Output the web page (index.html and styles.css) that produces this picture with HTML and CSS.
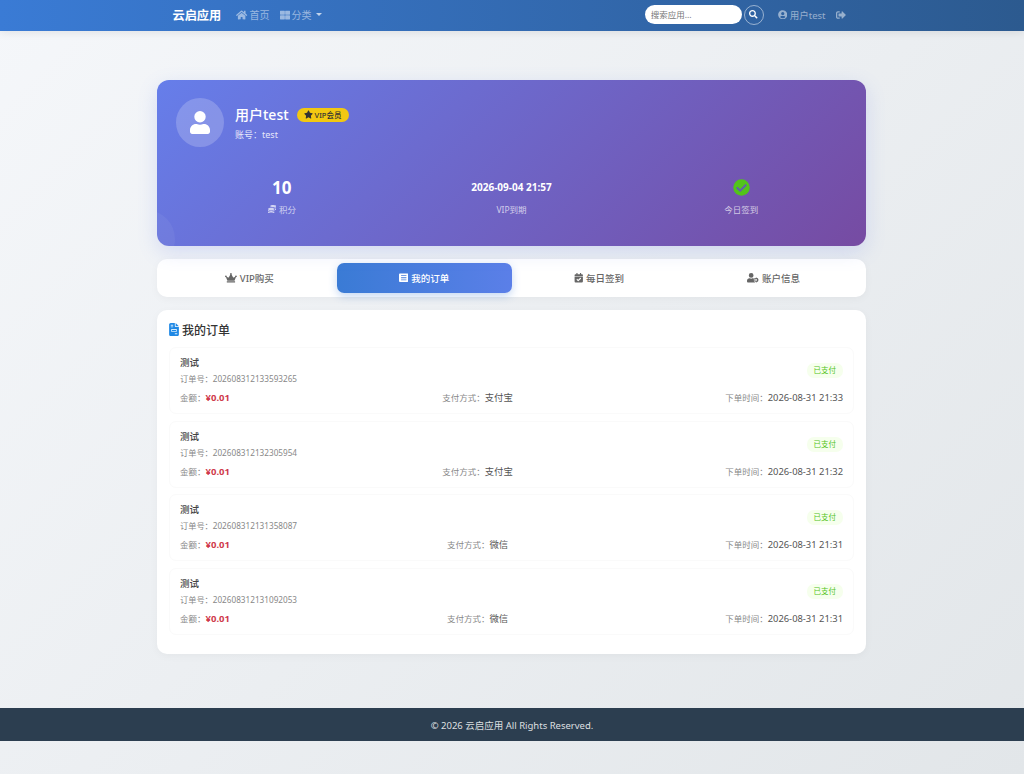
FILE: index.html
```html
<!DOCTYPE html>
<html lang="zh-CN">
<head>
    <meta charset="UTF-8">
    <meta name="viewport" content="width=device-width, initial-scale=1.0">
    <title>云启应用 - 我的订单</title>
    <link rel="stylesheet" href="styles.css">
</head>
<body>
    <nav class="navbar">
        <div class="nav-inner">
            <a class="brand">云启应用</a>
            <a class="nav-link">
                <svg class="icon icon-home" viewBox="0 0 576 512"><path d="M280 148 96 300v164a16 16 0 0 0 16 16l112-.3a16 16 0 0 0 16-16V368a16 16 0 0 1 16-16h64a16 16 0 0 1 16 16v95.6a16 16 0 0 0 16 16l112 .4a16 16 0 0 0 16-16V300L296 148a12 12 0 0 0-16 0zM572 251l-84-69V44a12 12 0 0 0-12-12h-56a12 12 0 0 0-12 12v72l-90-74a48 48 0 0 0-61 0L4 251a12 12 0 0 0-2 17l26 31a12 12 0 0 0 17 2L280 107a12 12 0 0 1 16 0l235 194a12 12 0 0 0 17-2l26-31a12 12 0 0 0-2-17z"/></svg>
                首页
            </a>
            <a class="nav-link">
                <svg class="icon" viewBox="0 0 512 512"><path d="M0 56a24 24 0 0 1 24-24h200a24 24 0 0 1 24 24v160a24 24 0 0 1-24 24H24a24 24 0 0 1-24-24zM264 56a24 24 0 0 1 24-24h200a24 24 0 0 1 24 24v160a24 24 0 0 1-24 24H288a24 24 0 0 1-24-24zM0 296a24 24 0 0 1 24-24h200a24 24 0 0 1 24 24v160a24 24 0 0 1-24 24H24a24 24 0 0 1-24-24zM264 296a24 24 0 0 1 24-24h200a24 24 0 0 1 24 24v160a24 24 0 0 1-24 24H288a24 24 0 0 1-24-24z"/></svg>
                分类
                <span class="caret"></span>
            </a>
            <div class="nav-right">
                <input class="search-input" type="text" placeholder="搜索应用...">
                <button class="search-btn">
                    <svg class="icon" viewBox="0 0 512 512"><path d="M505 442.700 405.300 343c-4.500-4.500-10.600-7-17-7H372c27.600-35.300 44-79.700 44-128C416 93.100 322.900 0 208 0S0 93.100 0 208s93.100 208 208 208c48.300 0 92.700-16.400 128-44v16.300c0 6.400 2.500 12.500 7 17l99.700 99.700c9.400 9.400 24.600 9.400 33.900 0l28.300-28.300c9.400-9.400 9.400-24.600.1-34zM208 336c-70.700 0-128-57.200-128-128 0-70.700 57.200-128 128-128 70.700 0 128 57.200 128 128 0 70.700-57.200 128-128 128z"/></svg>
                </button>
                <a class="nav-link user-link">
                    <svg class="icon" viewBox="0 0 512 512"><path d="M256 8C119 8 8 119 8 256s111 248 248 248 248-111 248-248S393 8 256 8zm0 96a88 88 0 1 1 0 176 88 88 0 0 1 0-176zm0 344c-59 0-111-27-146-69 19-36 56-61 99-61 2 0 5 0 7 1 13 4 27 7 40 7s27-3 40-7c2-1 5-1 7-1 43 0 80 25 99 61-35 42-87 69-146 69z"/></svg>
                    用户test
                </a>
                <a class="nav-link logout-link">
                    <svg class="icon" viewBox="0 0 512 512"><path d="M497 273 329 441c-15 15-41 4.500-41-17v-96H152c-13.300 0-24-10.700-24-24v-96c0-13.300 10.700-24 24-24h136V88c0-21.400 25.900-32 41-17l168 168c9.300 9.400 9.300 24.600 0 34zM192 436v-40c0-6.600-5.400-12-12-12H96c-17.700 0-32-14.300-32-32V160c0-17.700 14.300-32 32-32h84c6.600 0 12-5.400 12-12V76c0-6.600-5.400-12-12-12H96c-53 0-96 43-96 96v192c0 53 43 96 96 96h84c6.600 0 12-5.400 12-12z"/></svg>
                </a>
            </div>
        </div>
    </nav>

    <main class="container">
        <section class="profile-card">
            <div class="profile-head">
                <div class="avatar">
                    <svg viewBox="0 0 448 512"><path d="M224 256a128 128 0 1 0 0-256 128 128 0 0 0 0 256zm90 32h-17a174 174 0 0 1-146 0h-17C60 288 0 348 0 422v42c0 26 22 48 48 48h352c26 0 48-22 48-48v-42c0-74-60-134-134-134z"/></svg>
                </div>
                <div>
                    <div class="profile-name">
                        用户test
                        <span class="vip-badge">
                            <svg class="icon" viewBox="0 0 576 512"><path d="M259 18 194 150 49 171c-26 4-37 36-18 55l105 102-25 145c-4 26 23 46 46 34l130-68 130 68c23 12 51-8 46-34l-25-145 105-102c19-19 8-51-18-55l-145-21L317 18c-12-24-46-24-58 0z"/></svg>
                            VIP会员
                        </span>
                    </div>
                    <div class="profile-account">账号：test</div>
                </div>
            </div>
            <div class="stats">
                <div class="stat">
                    <div class="stat-value stat-big">10</div>
                    <div class="stat-label">
                        <svg class="icon" viewBox="0 0 512 512"><path d="M0 405v43c0 35 86 64 192 64s192-29 192-64v-43c-41 29-117 43-192 43S41 434 0 405zM320 128c106 0 192-29 192-64S426 0 320 0 128 29 128 64s86 64 192 64zM0 300v51c0 35 86 64 192 64s192-29 192-64v-51c-41 34-117 52-192 52S41 334 0 300zm416 11c57-11 96-32 96-55v-43c-23 16-57 27-96 34zM192 160C86 160 0 196 0 240s86 80 192 80 192-36 192-80-86-80-192-80zm219 56c60-11 101-32 101-56v-43c-35 25-96 38-160 41 29 14 51 33 59 58z"/></svg>
                        积分
                    </div>
                </div>
                <div class="stat">
                    <div class="stat-value stat-date">2026-09-04 21:57</div>
                    <div class="stat-label">VIP到期</div>
                </div>
                <div class="stat">
                    <div class="stat-value">
                        <svg class="check-icon" viewBox="0 0 512 512"><circle cx="256" cy="256" r="248" fill="#52c41a"/><path fill="#5f63a8" d="M227 387 411 203c6-6 6-16 0-22l-23-23c-6-6-16-6-22 0L216 308l-70-70c-6-6-16-6-22 0l-23 23c-6 6-6 16 0 22l104 104c6 6 16 6 22 0z"/></svg>
                    </div>
                    <div class="stat-label">今日签到</div>
                </div>
            </div>
        </section>

        <div class="tabs">
            <button class="tab">
                <svg class="icon icon-wide" viewBox="0 0 640 512"><path d="M528 448H112c-9 0-16 7-16 16v32c0 9 7 16 16 16h416c9 0 16-7 16-16v-32c0-9-7-16-16-16zm64-320c-26 0-48 22-48 48 0 7 2 14 4 20l-72 43c-15 9-35 4-44-12L351 85c11-9 17-22 17-37 0-26-22-48-48-48s-48 22-48 48c0 15 7 28 17 37l-81 142c-9 16-29 21-44 12l-72-43c3-6 4-13 4-20 0-26-22-48-48-48S0 150 0 176s22 48 48 48c3 0 5 0 8-1l72 193h384l72-193c3 1 5 1 8 1 26 0 48-22 48-48s-22-48-48-48z"/></svg>
                VIP购买
            </button>
            <button class="tab tab-active">
                <svg class="icon" viewBox="0 0 512 512"><path fill-rule="evenodd" d="M464 480H48c-27 0-48-21-48-48V80c0-27 21-48 48-48h416c27 0 48 21 48 48v352c0 27-21 48-48 48zM112 120v48h288v-48zm0 112v48h288v-48zm0 112v48h288v-48z"/></svg>
                我的订单
            </button>
            <button class="tab">
                <svg class="icon" viewBox="0 0 448 512"><path fill-rule="evenodd" d="M436 160H12c-7 0-12-5-12-12v-36c0-26 22-48 48-48h48V12c0-7 5-12 12-12h40c7 0 12 5 12 12v52h128V12c0-7 5-12 12-12h40c7 0 12 5 12 12v52h48c26 0 48 22 48 48v36c0 7-5 12-12 12zM12 192h424c7 0 12 5 12 12v260c0 26-22 48-48 48H48c-26 0-48-22-48-48V204c0-7 5-12 12-12zm334 96-28-28c-5-5-12-5-17 0L195 365l-46-46c-5-5-12-5-17 0l-28 28c-5 5-5 12 0 17l82 83c5 5 12 5 17 0l143-142c5-5 5-12 0-17z"/></svg>
                每日签到
            </button>
            <button class="tab">
                <svg class="icon icon-wide" viewBox="0 0 640 512"><path fill-rule="evenodd" d="M224 256a128 128 0 1 0 0-256 128 128 0 0 0 0 256zm90 32h-17a174 174 0 0 1-146 0h-17C60 288 0 348 0 422v42c0 26 22 48 48 48h352c12 0 23-5 32-12-8-10-10-24-4-36l10-18-12-8c-16-12-20-30-12-46 2-26 2-50 0-62-25-24-60-48-100-48zM504 240l12 0 8 32 28 12 28-16 24 24-16 28 12 28 32 8v36l-32 8-12 28 16 28-24 24-28-16-28 12-8 32h-36l-8-32-28-12-28 16-24-24 16-28-12-28-32-8v-36l32-8 12-28-16-28 24-24 28 16 28-12 8-32zm-16 88a48 48 0 1 0 0 96 48 48 0 0 0 0-96z"/></svg>
                账户信息
            </button>
        </div>

        <section class="orders-card">
            <h2 class="orders-title">
                <svg class="title-icon" viewBox="0 0 384 512"><path fill="#1e88e5" d="M64 0C29 0 0 29 0 64v384c0 35 29 64 64 64h256c35 0 64-29 64-64V160H256c-18 0-32-14-32-32V0z"/><path fill="#1e88e5" d="M256 0v128h128z"/><path fill="#d7ebfb" d="M64 72h96v32H64zm0 64h96v32H64zm16 104h224v104H80zm32 32v40h160v-40zm112 136h96v32h-96z"/></svg>
                我的订单
            </h2>
            <div class="order-list">
                <div class="order-item">
                    <div class="order-top">
                        <div>
                            <div class="order-name">测试</div>
                            <div class="order-no">订单号：202608312133593265</div>
                        </div>
                        <span class="status">已支付</span>
                    </div>
                    <div class="order-meta">
                        <span><span class="meta-key">金额：</span><strong class="price">¥0.01</strong></span>
                        <span><span class="meta-key">支付方式：</span>支付宝</span>
                        <span><span class="meta-key">下单时间：</span>2026-08-31 21:33</span>
                    </div>
                </div>
                <div class="order-item">
                    <div class="order-top">
                        <div>
                            <div class="order-name">测试</div>
                            <div class="order-no">订单号：202608312132305954</div>
                        </div>
                        <span class="status">已支付</span>
                    </div>
                    <div class="order-meta">
                        <span><span class="meta-key">金额：</span><strong class="price">¥0.01</strong></span>
                        <span><span class="meta-key">支付方式：</span>支付宝</span>
                        <span><span class="meta-key">下单时间：</span>2026-08-31 21:32</span>
                    </div>
                </div>
                <div class="order-item">
                    <div class="order-top">
                        <div>
                            <div class="order-name">测试</div>
                            <div class="order-no">订单号：202608312131358087</div>
                        </div>
                        <span class="status">已支付</span>
                    </div>
                    <div class="order-meta">
                        <span><span class="meta-key">金额：</span><strong class="price">¥0.01</strong></span>
                        <span><span class="meta-key">支付方式：</span>微信</span>
                        <span><span class="meta-key">下单时间：</span>2026-08-31 21:31</span>
                    </div>
                </div>
                <div class="order-item">
                    <div class="order-top">
                        <div>
                            <div class="order-name">测试</div>
                            <div class="order-no">订单号：202608312131092053</div>
                        </div>
                        <span class="status">已支付</span>
                    </div>
                    <div class="order-meta">
                        <span><span class="meta-key">金额：</span><strong class="price">¥0.01</strong></span>
                        <span><span class="meta-key">支付方式：</span>微信</span>
                        <span><span class="meta-key">下单时间：</span>2026-08-31 21:31</span>
                    </div>
                </div>
            </div>
        </section>
    </main>

    <footer class="footer">© 2026 云启应用 All Rights Reserved.</footer>
</body>
</html>
```

FILE: styles.css
```css
* {
    box-sizing: border-box;
}
html {
    height: 100%;
}
body {
    font-family: "Noto Sans", "Noto Sans CJK SC", sans-serif;
    background: linear-gradient(135deg, #f5f7fa 0%, #e2e6e9 100%);
    min-height: 774px;
    color: #333;
    margin: 0;
    padding-bottom: 33px;
}
.icon {
    width: 1em;
    height: 1em;
    fill: currentColor;
    flex-shrink: 0;
}
.icon-wide {
    width: 1.25em;
}
.icon-home {
    width: 1.125em;
}
.navbar {
    height: 31px;
    background: linear-gradient(90deg, #3a7bd5 0%, #2c5a8f 100%);
    box-shadow: 0 2px 8px rgba(0, 0, 0, 0.08);
}
.nav-inner {
    max-width: 709px;
    height: 100%;
    margin: 0 auto;
    padding: 0 15px 2px;
    display: flex;
    align-items: center;
}
.brand {
    color: #fff;
    font-size: 12.200px;
    font-weight: 700;
    margin-right: 15px;
}
.nav-link {
    display: flex;
    align-items: center;
    gap: 2px;
    color: rgba(255, 255, 255, 0.5);
    font-size: 10px;
    margin-right: 10px;
}
.caret {
    width: 0;
    height: 0;
    margin-left: 2px;
    border: 3px solid transparent;
    border-top-color: rgba(255, 255, 255, 0.7);
    border-bottom: 0;
}
.nav-right {
    margin-left: auto;
    display: flex;
    align-items: center;
}
.search-input {
    width: 97px;
    height: 19px;
    padding: 0 5px;
    border: 1px solid rgba(255, 255, 255, 0.3);
    border-radius: 10px;
    background: #fff;
    font-family: inherit;
    font-size: 8.500px;
}
.search-input::placeholder {
    color: #777;
}
.search-btn {
    width: 20px;
    height: 20px;
    padding: 0;
    margin: 0 14px 0 2px;
    display: flex;
    align-items: center;
    justify-content: center;
    color: #fff;
    font-size: 8.500px;
    background: transparent;
    border: 1px solid rgba(255, 255, 255, 0.5);
    border-radius: 50%;
}
.user-link {
    gap: 2.500px;
    margin-right: 10px;
    font-size: 9.500px;
}
.logout-link {
    margin-right: 6px;
}
.container {
    width: 709px;
    margin: 49px 158px 54px 157px;
}
.profile-card {
    position: relative;
    overflow: hidden;
    height: 166px;
    padding: 18px;
    color: #fff;
    background: linear-gradient(135deg, #667eea 0%, #764ba2 100%);
    border-radius: 12px;
    box-shadow: 0 6px 20px rgba(102, 126, 234, 0.2);
}
.profile-card::before {
    content: "";
    position: absolute;
    left: -40px;
    bottom: -22px;
    width: 58px;
    height: 58px;
    border-radius: 50%;
    background: rgba(255, 255, 255, 0.05);
}
.profile-head {
    display: flex;
    align-items: center;
    gap: 11px;
    padding-left: 1px;
}
.avatar {
    width: 48px;
    height: 49px;
    display: flex;
    align-items: center;
    justify-content: center;
    background: rgba(255, 255, 255, 0.2);
    border-radius: 50%;
}
.avatar svg {
    width: 20px;
    height: 23px;
    fill: #fff;
}
.profile-name {
    display: flex;
    align-items: center;
    gap: 8px;
    font-size: 14px;
    font-weight: 500;
    line-height: 20px;
}
.vip-badge {
    display: inline-flex;
    align-items: center;
    gap: 2px;
    height: 14px;
    padding: 0 8px 0 7px;
    color: #333;
    font-size: 7.500px;
    font-weight: 500;
    background: #f2c811;
    border-radius: 7px;
}
.vip-badge .icon {
    width: 9px;
    height: 9px;
}
.profile-account {
    margin-top: 3px;
    font-size: 9px;
    color: rgba(255, 255, 255, 0.85);
}
.stats {
    display: grid;
    grid-template-columns: repeat(3, 1fr);
    gap: 16px;
    margin-top: 27px;
}
.stat {
    text-align: center;
}
.stat-value {
    height: 26px;
    display: flex;
    align-items: center;
    justify-content: center;
    font-weight: 700;
}
.stat-big {
    font-size: 17px;
}
.stat-date {
    font-size: 10px;
}
.check-icon {
    width: 17px;
    height: 17px;
}
.stat-label {
    display: flex;
    align-items: center;
    justify-content: center;
    gap: 3px;
    margin-top: 3px;
    font-size: 8.500px;
    color: rgba(255, 255, 255, 0.7);
}
.tabs {
    display: grid;
    grid-template-columns: repeat(4, 1fr);
    margin-top: 13px;
    padding: 4px 5px;
    background: #fff;
    border-radius: 10px;
    box-shadow: 0 2px 8px rgba(0, 0, 0, 0.04);
}
.tab {
    height: 30px;
    display: flex;
    align-items: center;
    justify-content: center;
    gap: 3px;
    font-family: inherit;
    font-size: 9.500px;
    font-weight: 500;
    color: #666;
    background: transparent;
    border: none;
    border-radius: 7px;
}
.tab-active {
    color: #fff;
    background: linear-gradient(90deg, #3a7bd5 0%, #5b7fe8 100%);
    box-shadow: 0 3px 8px rgba(58, 123, 213, 0.3);
}
.orders-card {
    height: 344px;
    margin-top: 13px;
    padding: 12px;
    background: #fff;
    border-radius: 10px;
    box-shadow: 0 2px 8px rgba(0, 0, 0, 0.04);
}
.orders-title {
    display: flex;
    align-items: center;
    gap: 3px;
    height: 15px;
    margin: 0 0 10px;
    font-size: 12px;
    font-weight: 500;
    color: #333;
}
.title-icon {
    width: 10px;
    height: 13px;
}
.order-list {
    display: flex;
    flex-direction: column;
    gap: 6.700px;
}
.order-item {
    height: 67px;
    padding: 8px 10px;
    border: 1px solid #fafafa;
    border-radius: 7px;
}
.order-top {
    display: flex;
    justify-content: space-between;
    align-items: center;
}
.order-name {
    font-size: 9.500px;
    font-weight: 500;
    line-height: 14px;
    color: #444;
}
.order-no {
    margin-top: 2px;
    font-size: 8.200px;
    line-height: 13px;
    color: #888;
}
.status {
    padding: 2px 7px;
    font-size: 7.500px;
    line-height: 11px;
    color: #52c41a;
    background: #f6ffed;
    border-radius: 7px;
}
.order-meta {
    display: flex;
    justify-content: space-between;
    margin-top: 6px;
    font-size: 9.400px;
    line-height: 14px;
    color: #555;
}
.meta-key {
    font-size: 8.500px;
    color: #888;
}
.price {
    color: #cf3a4c;
    font-size: 9.500px;
}
.footer {
    height: 33px;
    line-height: 35px;
    text-align: center;
    font-size: 9.500px;
    color: rgba(255, 255, 255, 0.85);
    background: #2c3e50;
}
```
